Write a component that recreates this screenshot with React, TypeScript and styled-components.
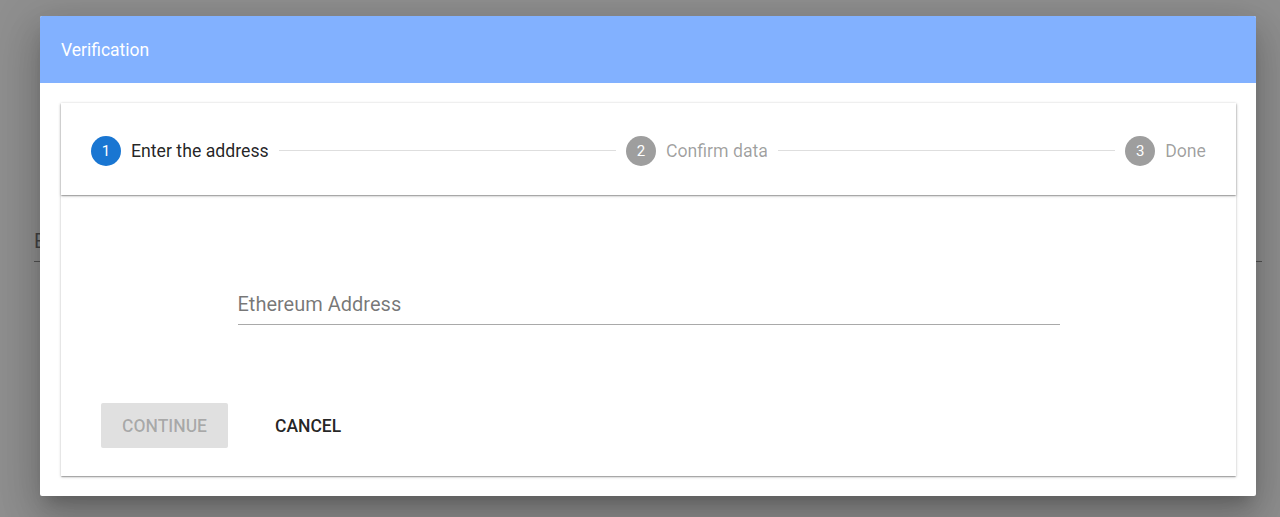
import React from 'react';
import styled, { createGlobalStyle } from 'styled-components';

const GlobalStyle = createGlobalStyle`
  html, body {
    margin: 0;
    padding: 0;
    background: #ffffff;
    font-family: Roboto, "Noto Sans", Arial, sans-serif;
    -webkit-font-smoothing: antialiased;
  }
  * { box-sizing: border-box; }
`;

const Page = styled.div`
  width: 1280px;
  height: 517px;
  position: relative;
  overflow: hidden;
  padding: 0 18px 0 34px;
`;

const BackField = styled.div`
  margin-top: 229px;
  width: 1228px;
  border-bottom: 1px solid rgba(0, 0, 0, 0.42);
  padding-bottom: 8px;
  font-size: 20px;
  line-height: 24px;
  color: rgba(0, 0, 0, 0.54);
`;

const Backdrop = styled.div`
  position: absolute;
  inset: 0;
  background: rgba(0, 0, 0, 0.44);
`;

const Dialog = styled.div`
  position: absolute;
  left: 40px;
  top: 16px;
  width: 1216px;
  height: 480px;
  background: #ffffff;
  border-radius: 2px;
  display: flex;
  flex-direction: column;
  box-shadow: 0 11px 15px -7px rgba(0, 0, 0, 0.2),
    0 24px 38px 3px rgba(0, 0, 0, 0.14),
    0 9px 46px 8px rgba(0, 0, 0, 0.12);
`;

const DialogHeader = styled.div`
  height: 67px;
  background: #82b1ff;
  color: #ffffff;
  font-size: 17.5px;
  display: flex;
  align-items: center;
  padding: 0 21px;
  border-radius: 2px 2px 0 0;
`;

const DialogBody = styled.div`
  flex: 1;
  padding: 20px 20px 20px 21px;
  display: flex;
`;

const Card = styled.div`
  flex: 1;
  display: flex;
  flex-direction: column;
  background: #ffffff;
  box-shadow: 0 1px 3px rgba(0, 0, 0, 0.2), 0 1px 1px rgba(0, 0, 0, 0.14),
    0 2px 1px -1px rgba(0, 0, 0, 0.12);
`;

const StepperBar = styled.div`
  height: 92px;
  display: flex;
  align-items: center;
  padding: 3px 20px 0;
  position: relative;
  z-index: 1;
  box-shadow: 0 1px 3px rgba(0, 0, 0, 0.2), 0 1px 1px rgba(0, 0, 0, 0.14),
    0 2px 1px -1px rgba(0, 0, 0, 0.12);
`;

const Step = styled.div`
  display: flex;
  align-items: center;
  gap: 10px;
  padding: 0 10px;
`;

const StepIcon = styled.div<{ $active?: boolean }>`
  width: 30px;
  height: 30px;
  border-radius: 50%;
  background: ${p => (p.$active ? '#1976d2' : '#9e9e9e')};
  color: #ffffff;
  font-size: 15px;
  display: flex;
  align-items: center;
  justify-content: center;
`;

const StepLabel = styled.span<{ $active?: boolean }>`
  font-size: 17.7px;
  color: ${p => (p.$active ? 'rgba(0, 0, 0, 0.87)' : 'rgba(0, 0, 0, 0.38)')};
`;

const Connector = styled.div`
  flex: 1;
  height: 1px;
  background: #dedede;
`;

const Content = styled.div`
  flex: 1;
  display: flex;
  flex-direction: column;
  padding: 97px 40px 28px;
`;

const Field = styled.div`
  width: 822px;
  align-self: center;
  border-bottom: 1.5px solid #a9a9a9;
  padding-bottom: 8px;
  font-size: 20px;
  line-height: 24px;
  color: rgba(0, 0, 0, 0.54);
`;

const Actions = styled.div`
  margin-top: auto;
  display: flex;
  align-items: center;
  gap: 27px;
`;

const Button = styled.button<{ $disabled?: boolean }>`
  height: 45px;
  padding: 0 20px;
  border: none;
  border-radius: 2px;
  font-family: Roboto, "Noto Sans", Arial, sans-serif;
  font-size: 17.5px;
  font-weight: 500;
  text-transform: uppercase;
  background: ${p => (p.$disabled ? '#e0e0e0' : 'transparent')};
  color: ${p => (p.$disabled ? 'rgba(0, 0, 0, 0.26)' : 'rgba(0, 0, 0, 0.87)')};
  min-width: ${p => (p.$disabled ? '127px' : 'auto')};
`;

const steps = ['Enter the address', 'Confirm data', 'Done'];

const App: React.FC = () => {
  return (
    <>
      <GlobalStyle />
      <Page>
        <BackField>Ethereum Address</BackField>
        <Backdrop />
        <Dialog>
          <DialogHeader>Verification</DialogHeader>
          <DialogBody>
            <Card>
              <StepperBar>
                {steps.map((label, index) => (
                  <React.Fragment key={label}>
                    {index > 0 && <Connector />}
                    <Step>
                      <StepIcon $active={index === 0}>{index + 1}</StepIcon>
                      <StepLabel $active={index === 0}>{label}</StepLabel>
                    </Step>
                  </React.Fragment>
                ))}
              </StepperBar>
              <Content>
                <Field>Ethereum Address</Field>
                <Actions>
                  <Button $disabled disabled>Continue</Button>
                  <Button>Cancel</Button>
                </Actions>
              </Content>
            </Card>
          </DialogBody>
        </Dialog>
      </Page>
    </>
  );
};

export default App;
